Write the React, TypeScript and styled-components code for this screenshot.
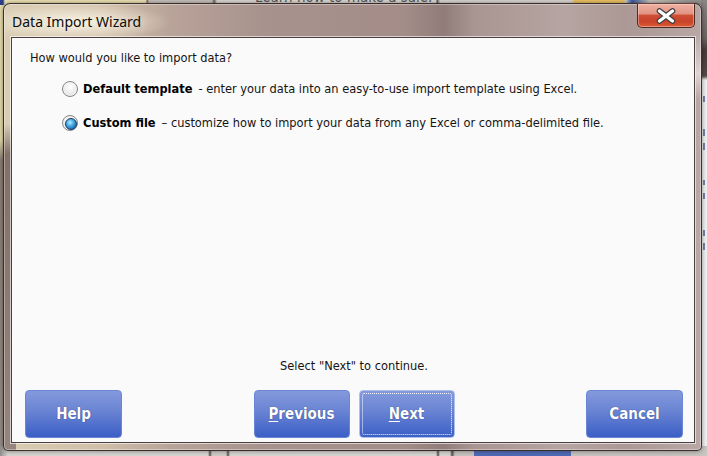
import React from "react";
import styled, { createGlobalStyle } from "styled-components";

const GlobalStyle = createGlobalStyle`
  html, body { margin: 0; padding: 0; }
  body { width: 707px; height: 456px; overflow: hidden; background: #8a817c; }
  * { box-sizing: border-box; }
`;

const UI_FONT = `"DejaVu Sans Condensed", "DejaVu Sans", "Liberation Sans", sans-serif`;

const Desktop = styled.div`
  position: relative;
  width: 707px;
  height: 456px;
  overflow: hidden;
  background: linear-gradient(to bottom, #e9dfb0 0px, #e6dbab 140px, #8c7f76 160px, #9a9089 100%);
`;

const BackTopStrip = styled.div`
  position: absolute;
  left: 0;
  top: 0;
  width: 707px;
  height: 5px;
  background: linear-gradient(
    to right,
    #2c3f8a 0, #2c3f8a 3px, #efe5b5 5px, #efe5b5 146px, #6b6360 147px, #c9c3bd 149px,
    #c9c3bd 212px, #6b6360 214px, #dedad6 217px, #dedad6 436px, #5a5350 437px,
    #dcd8d3 440px, #dcd8d3 572px, #f0c466 574px, #f0c466 624px, #c9d0dd 626px,
    #3c5aa0 632px, #c9c3bd 650px, #8a8a8a 707px
  );
`;

const BackCaption = styled.span`
  position: absolute;
  left: 255px;
  top: -12px;
  font: 15px ${UI_FONT};
  color: #5a5a5a;
  white-space: nowrap;
`;

const BackRightStrip = styled.div`
  position: absolute;
  left: 701px;
  top: 0;
  width: 6px;
  height: 456px;
  background: linear-gradient(to bottom, #8a8584 0, #6e6462 38px, #4a3c3a 50px, #5a4a48 76px, #f2f2f2 80px, #f2f2f2 100%);
`;

const BackRightMark = styled.div<{ $top: number; $h: number }>`
  position: absolute;
  left: 2px;
  top: ${(p) => p.$top}px;
  width: 4px;
  height: ${(p) => p.$h}px;
  border-left: 2px solid #2a3a78;
  opacity: 0.6;
`;

const BackBottomStrip = styled.div`
  position: absolute;
  left: 0;
  top: 446px;
  width: 707px;
  height: 10px;
  background: linear-gradient(
    to right,
    #8e8e8e 0, #d8d6d2 8px, #d8d6d2 208px, #55504c 210px, #d0ccc8 212px, #d0ccc8 226px,
    #55504c 228px, #d8d6d2 230px, #d8d6d2 436px, #55504c 438px, #d8d6d2 440px,
    #d8d6d2 450px, #55504c 452px, #c8c4c0 455px, #c8c4c0 707px
  );
`;

const BackButton = styled.div`
  position: absolute;
  left: 474px;
  top: 444px;
  width: 97px;
  height: 24px;
  border-radius: 4px;
  background: linear-gradient(#5d76bd, #3f5cb0);
`;

const Window = styled.div`
  position: absolute;
  left: 3px;
  top: 3px;
  width: 699px;
  height: 448px;
  display: flex;
  flex-direction: column;
  padding: 0 6px 7px 7px;
  border: 1px solid rgba(45, 32, 30, 0.9);
  border-radius: 7px 7px 5px 5px;
  box-shadow: inset 0 0 0 1px rgba(255, 255, 255, 0.35), 0 0 5px rgba(0, 0, 0, 0.45);
  background:
    radial-gradient(ellipse 95px 20px at 72px 18px, rgba(255, 250, 236, 0.85), rgba(255, 250, 236, 0) 100%),
    linear-gradient(to bottom, rgba(120, 104, 98, 0) 120px, rgba(130, 112, 104, 1) 150px, rgba(150, 132, 126, 1) 100%) left top / 12px 100% no-repeat,
    linear-gradient(to bottom, rgba(230, 222, 220, 0) 30px, rgba(232, 224, 222, 0.8) 70px, rgba(232, 224, 222, 0) 95px) right top / 10px 100% no-repeat,
    linear-gradient(
      to right,
      #dacdb3 0px, #cfbea8 100px, #b8a299 170px, #a8928d 260px, #a48d89 400px,
      #907c79 440px, #a99592 470px, #b6a5a2 560px, #ac9895 620px, #b8a8a5 699px
    );
`;

const TitleBar = styled.div`
  position: relative;
  height: 33px;
  display: flex;
  align-items: center;
  padding: 2px 0 0 1px;
`;

const Title = styled.span`
  font: 14px "Noto Sans", "Open Sans", sans-serif;
  color: #0c0c0c;
  text-shadow: 0 0 8px rgba(255, 252, 240, 0.9);
`;

const CloseButton = styled.button`
  position: absolute;
  right: 0;
  top: -1px;
  width: 58px;
  height: 25px;
  padding: 0;
  display: flex;
  align-items: center;
  justify-content: center;
  border: 1px solid #4d2a24;
  border-top-color: #6a4038;
  border-radius: 0 0 5px 5px;
  background: linear-gradient(
    to bottom,
    #eeb2a4 0%, #e29484 42%, #cf4e36 50%, #c8432a 75%, #dc5a34 100%
  );
  box-shadow: inset 0 0 0 1px rgba(255, 220, 210, 0.45);
  cursor: default;
`;

const Client = styled.div`
  flex: 1;
  display: flex;
  flex-direction: column;
  border: 1px solid #4a4040;
  background: #fafafa;
  box-shadow: 0 0 0 1px rgba(255, 255, 255, 0.6);
  padding: 12px 11px 4px 13px;
  font: 12.7px ${UI_FONT};
  color: #141414;
`;

const Question = styled.div`
  padding-left: 5px;
  line-height: 16px;
`;

const OptionList = styled.div`
  display: flex;
  flex-direction: column;
  gap: 18px;
  margin-top: 15px;
  padding-left: 37px;
`;

const OptionRow = styled.label`
  display: flex;
  align-items: center;
  gap: 5px;
  height: 16px;
  line-height: 16px;
  white-space: nowrap;
`;

const Radio = styled.span<{ $checked?: boolean }>`
  position: relative;
  width: 16px;
  height: 16px;
  flex: none;
  border-radius: 50%;
  border: 1px solid #868686;
  background: radial-gradient(circle at 50% 35%, #ffffff 0%, #ececec 55%, #cfcfcf 100%);
  box-shadow: inset 0 0 0 1px #f4f4f4;

  &::after {
    content: "";
    display: ${(p) => (p.$checked ? "block" : "none")};
    position: absolute;
    left: 2px;
    top: 2px;
    width: 10px;
    height: 10px;
    border-radius: 50%;
    border: 1px solid #163a64;
    background: radial-gradient(circle at 40% 35%, #b8ecff 0%, #4fb4ea 35%, #1d6fb8 75%, #124c8a 100%);
  }
`;

const OptionName = styled.b`
  font-weight: bold;
  color: #000;
  margin-right: 6px;
`;

const Spacer = styled.div`
  flex: 1;
`;

const Status = styled.div`
  text-align: center;
  line-height: 16px;
  margin-bottom: 16px;
`;

const ButtonRow = styled.div`
  display: grid;
  grid-template-columns: 97px 1fr auto 1fr 97px;
  height: 48px;
`;

const NavGroup = styled.div`
  grid-column: 3;
  display: flex;
  gap: 9px;
`;

const WizardButton = styled.button<{ $focused?: boolean; $col?: number }>`
  position: relative;
  grid-column: ${(p) => p.$col ?? "auto"};
  width: ${(p) => (p.$col ? "97px" : "96px")};
  height: 48px;
  padding: 0;
  border: 1px solid ${(p) => (p.$focused ? "#aebfea" : "#6a86d4")};
  border-radius: 4px;
  background: linear-gradient(to bottom, #8499dc 0%, #6c86d4 40%, #3c5fc6 100%);
  color: #ffffff;
  font: bold 15px ${UI_FONT};
  text-shadow: 0 0 1px rgba(10, 20, 70, 0.7);
  cursor: default;

  &::after {
    content: "";
    display: ${(p) => (p.$focused ? "block" : "none")};
    position: absolute;
    inset: 2px;
    border: 1px dotted rgba(255, 255, 255, 0.95);
    border-radius: 2px;
  }

  u {
    text-decoration-thickness: 1px;
    text-underline-offset: 2px;
  }
`;

const CloseGlyph = () => (
  <svg width="22" height="16" viewBox="0 0 22 16">
    <path d="M4.5 3 L17.5 13 M17.5 3 L4.5 13" stroke="#3c3c3c" strokeWidth="5.6" strokeLinecap="round" fill="none" />
    <path d="M4.5 3 L17.5 13 M17.5 3 L4.5 13" stroke="#ffffff" strokeWidth="3.4" strokeLinecap="round" fill="none" />
  </svg>
);

export default function App() {
  return (
    <>
      <GlobalStyle />
      <Desktop>
        <BackTopStrip />
        <BackCaption>Learn how to make a sale.</BackCaption>
        <BackRightStrip>
          <BackRightMark $top={96} $h={6} />
          <BackRightMark $top={129} $h={7} />
          <BackRightMark $top={143} $h={7} />
          <BackRightMark $top={180} $h={5} />
          <BackRightMark $top={193} $h={6} />
          <BackRightMark $top={230} $h={6} />
          <BackRightMark $top={243} $h={7} />
        </BackRightStrip>
        <BackBottomStrip />
        <BackButton />
        <Window>
          <TitleBar>
            <Title>Data Import Wizard</Title>
            <CloseButton aria-label="Close">
              <CloseGlyph />
            </CloseButton>
          </TitleBar>
          <Client>
            <Question>How would you like to import data?</Question>
            <OptionList>
              <OptionRow>
                <Radio />
                <span>
                  <OptionName>Default template</OptionName>- enter your data into an easy-to-use import template using Excel.
                </span>
              </OptionRow>
              <OptionRow>
                <Radio $checked />
                <span>
                  <OptionName>Custom file</OptionName>– customize how to import your data from any Excel or comma-delimited file.
                </span>
              </OptionRow>
            </OptionList>
            <Spacer />
            <Status>Select "Next" to continue.</Status>
            <ButtonRow>
              <WizardButton $col={1}>Help</WizardButton>
              <NavGroup>
                <WizardButton>
                  <u>P</u>revious
                </WizardButton>
                <WizardButton $focused>
                  <u>N</u>ext
                </WizardButton>
              </NavGroup>
              <WizardButton $col={5}>Cancel</WizardButton>
            </ButtonRow>
          </Client>
        </Window>
      </Desktop>
    </>
  );
}
